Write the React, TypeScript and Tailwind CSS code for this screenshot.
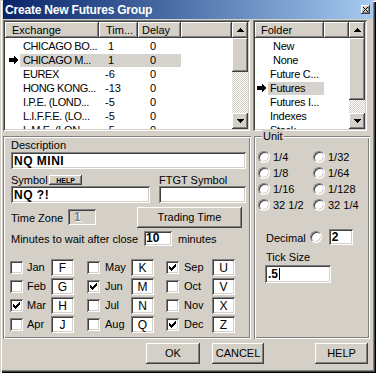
import React from "react";

const raised =
  "shadow-[inset_-1px_-1px_#404040,inset_1px_1px_#ffffff,inset_-2px_-2px_#808080]";
const sunken =
  "shadow-[inset_1px_1px_#808080,inset_-1px_-1px_#ffffff,inset_2px_2px_#404040,inset_-2px_-2px_#d4d0c8]";
const etched =
  "shadow-[inset_1px_1px_#808080,inset_-1px_-1px_#ffffff,inset_2px_2px_#ffffff,inset_-2px_-2px_#808080]";
const dither =
  "bg-[image:repeating-conic-gradient(#ffffff_0%_25%,#d4d0c8_0%_50%)] bg-[length:2px_2px]";

const exchanges = [
  { name: "CHICAGO BO...", tim: "1", delay: "0" },
  { name: "CHICAGO M...", tim: "1", delay: "0", sel: true },
  { name: "EUREX", tim: "-6", delay: "0" },
  { name: "HONG KONG...", tim: "-13", delay: "0" },
  { name: "I.P.E. (LOND...", tim: "-5", delay: "0" },
  { name: "L.I.F.F.E. (LO...", tim: "-5", delay: "0" },
  { name: "L.M.E. (LON...", tim: "-5", delay: "0" },
];

const folders = [
  { name: "New", indent: true },
  { name: "None", indent: true },
  { name: "Future C..." },
  { name: "Futures", sel: true },
  { name: "Futures I..." },
  { name: "Indexes" },
  { name: "Stock..." },
];

const months = [
  [
    { m: "Jan", c: "F" },
    { m: "Feb", c: "G" },
    { m: "Mar", c: "H", on: true },
    { m: "Apr", c: "J" },
  ],
  [
    { m: "May", c: "K" },
    { m: "Jun", c: "M", on: true },
    { m: "Jul", c: "N" },
    { m: "Aug", c: "Q" },
  ],
  [
    { m: "Sep", c: "U", on: true },
    { m: "Oct", c: "V" },
    { m: "Nov", c: "X" },
    { m: "Dec", c: "Z", on: true },
  ],
];

function Pointer() {
  return (
    <svg width="10" height="8" viewBox="0 0 10 8" shapeRendering="crispEdges">
      <path d="M0 2H5V0H6V1H7V2H8V3H9V5H8V6H7V7H6V8H5V6H0Z" fill="#000" />
    </svg>
  );
}

function Tri({ down }: { down?: boolean }) {
  const rows = down ? [7, 5, 3, 1] : [1, 3, 5, 7];
  return (
    <svg width="7" height="4" viewBox="0 0 7 4" shapeRendering="crispEdges">
      {rows.map((w, i) => (
        <rect key={i} x={(7 - w) / 2} y={i} width={w} height="1" fill="#000" />
      ))}
    </svg>
  );
}

function Check() {
  const ys = [2, 3, 4, 3, 2, 1, 0];
  return (
    <svg width="7" height="7" viewBox="0 0 7 7" shapeRendering="crispEdges">
      {ys.map((y, i) => (
        <rect key={i} x={i} y={y} width="1" height="3" fill="#000" />
      ))}
    </svg>
  );
}

function CheckBox({ on }: { on?: boolean }) {
  return (
    <div className={`w-[13px] h-[13px] shrink-0 bg-white flex items-center justify-center ${sunken}`}>
      {on && <Check />}
    </div>
  );
}

function Radio() {
  return (
    <div className="w-[12px] h-[12px] shrink-0 rounded-full bg-white border border-t-[#808080] border-l-[#808080] border-r-white border-b-white shadow-[inset_1px_1px_#404040,inset_-1px_-1px_#d4d0c8]" />
  );
}

function VScroll({ thumb }: { thumb: string }) {
  return (
    <div className="w-[16px] shrink-0 flex flex-col">
      <div className={`h-[16px] shrink-0 bg-[#d4d0c8] flex items-center justify-center ${raised}`}>
        <Tri />
      </div>
      <div className={`shrink-0 bg-[#d4d0c8] ${thumb} ${raised}`} />
      <div className={`flex-1 ${dither}`} />
      <div className={`h-[16px] shrink-0 bg-[#d4d0c8] flex items-center justify-center ${raised}`}>
        <Tri down />
      </div>
    </div>
  );
}

function HeadCell({ w, pl, children }: { w: string; pl: string; children?: React.ReactNode }) {
  return (
    <div className={`h-[16px] shrink-0 bg-[#d4d0c8] flex items-center ${w} ${pl} ${raised}`}>
      {children}
    </div>
  );
}

function Button({ w, children }: { w: string; children: React.ReactNode }) {
  return (
    <div className={`h-[21px] bg-[#d4d0c8] flex items-center justify-center ${w} ${raised}`}>
      {children}
    </div>
  );
}

export default function App() {
  return (
    <div className="w-[376px] h-[373px] overflow-hidden bg-[#d4d0c8] text-black text-[11px] leading-none font-['Liberation_Sans',Arial,sans-serif] flex flex-col shadow-[inset_1px_1px_#d4d0c8,inset_2px_2px_#ffffff,inset_-1px_-1px_#000000,inset_-2px_-2px_#404040,inset_-3px_-3px_#808080]">
      {/* title */}
      <div className="mx-[3px] h-[19px] shrink-0 flex items-center bg-linear-to-r from-[#0a246a] to-[#a6caf0]">
        <span className="pl-[2px] text-white font-bold text-[12px] tracking-[-0.2px]">
          Create New Futures Group
        </span>
        <div className={`ml-auto mr-[3px] w-[9px] h-[9px] bg-[#d4d0c8] flex items-center justify-center ${raised}`}>
          <svg width="5" height="5" viewBox="0 0 5 5" shapeRendering="crispEdges">
            <path d="M0 0H1V1H2V2H3V1H4V0H5V1H4V2H3V3H4V4H5V5H4V4H3V3H2V4H1V5H0V4H1V3H2V2H1V1H0Z" fill="#000" />
          </svg>
        </div>
      </div>

      {/* lists */}
      <div className="mt-[1px] ml-[3px] flex gap-[3px] shrink-0">
        <div className={`w-[247px] h-[111px] bg-white p-[2px] flex ${sunken}`}>
          <div className="flex-1 flex flex-col overflow-hidden">
            <div className="flex shrink-0">
              <HeadCell w="w-[94px]" pl="pl-[7px]">Exchange</HeadCell>
              <HeadCell w="w-[39px]" pl="pl-[7px]">Tim...</HeadCell>
              <HeadCell w="w-[43px]" pl="pl-[4px]">Delay</HeadCell>
              <HeadCell w="flex-1" pl="pl-0" />
            </div>
            <div className="pt-[1px]">
              {exchanges.map((r) => (
                <div key={r.name} className="flex items-center h-[14px]">
                  <div className="w-[15px] pl-[4px] flex items-center">{r.sel && <Pointer />}</div>
                  <div className={`w-[161px] h-[13px] flex items-center whitespace-nowrap ${r.sel ? "bg-[#d6d3ce]" : ""}`}>
                    <span className="w-[85px] pl-[3px] tracking-[-0.4px]">{r.name}</span>
                    <span className={`w-[45px] ${r.tim.startsWith("-") ? "" : "pl-[3px]"}`}>{r.tim}</span>
                    <span>{r.delay}</span>
                  </div>
                </div>
              ))}
            </div>
          </div>
          <VScroll thumb="h-[34px]" />
        </div>

        <div className={`w-[114px] h-[111px] bg-white p-[2px] flex ${sunken}`}>
          <div className="flex-1 flex flex-col overflow-hidden">
            <div className="flex shrink-0">
              <HeadCell w="w-[69px]" pl="pl-[6px]">Folder</HeadCell>
              <HeadCell w="flex-1" pl="pl-0" />
            </div>
            <div className="pt-[1px]">
              {folders.map((f) => (
                <div key={f.name} className="flex items-center h-[14px]">
                  <div className="w-[13px] pl-[2px] flex items-center">{f.sel && <Pointer />}</div>
                  <div className={`w-[56px] h-[13px] flex items-center whitespace-nowrap tracking-[-0.3px] ${f.indent ? "pl-[5px]" : "pl-[2px]"} ${f.sel ? "bg-[#d6d3ce]" : ""}`}>
                    {f.name}
                  </div>
                </div>
              ))}
            </div>
          </div>
          <VScroll thumb="h-[62px]" />
        </div>
      </div>

      {/* panels */}
      <div className="mt-[5px] ml-[3px] flex gap-[3px] shrink-0">
        <div className={`w-[248px] h-[203px] pt-[3px] pl-[8px] flex flex-col ${etched}`}>
          <div className="h-[12px] leading-[12px]">Description</div>
          <div className={`mt-[1px] w-[235px] h-[17px] bg-white pl-[3px] flex items-center font-bold text-[12px] tracking-[0.5px] ${sunken}`}>
            NQ MINI
          </div>
          <div className="mt-[5px] h-[12px] flex items-center">
            <span className="w-[38px]">Symbol</span>
            <div className={`w-[33px] h-[10px] bg-[#d4d0c8] flex items-center justify-center font-bold text-[7px] ${raised}`}>
              HELP
            </div>
            <span className="ml-[77px]">FTGT Symbol</span>
          </div>
          <div className="flex gap-[9px]">
            <div className={`w-[139px] h-[17px] bg-white pl-[3px] flex items-center font-bold text-[12px] tracking-[0.5px] ${sunken}`}>
              NQ ?!
            </div>
            <div className={`w-[87px] h-[17px] bg-white ${sunken}`} />
          </div>
          <div className="mt-[6px] h-[16px] flex items-center">
            <span className="w-[57px] pt-[2px]">Time Zone</span>
            <div className={`w-[28px] h-[16px] pl-[6px] flex items-center text-[12px] font-bold text-[#808080] [text-shadow:1px_1px_#ffffff] ${sunken}`}>
              1
            </div>
            <div className="ml-[41px]">
              <Button w="w-[105px] h-[15px]">Trading Time</Button>
            </div>
          </div>
          <div className="mt-[5px] h-[16px] flex items-center">
            <span className="w-[133px] pt-[2px]">Minutes to wait after close</span>
            <div className={`w-[28px] h-[15px] bg-white pl-[2px] flex items-center font-bold text-[12px] ${sunken}`}>10</div>
            <span className="ml-[6px] pt-[2px]">minutes</span>
          </div>
          <div className="mt-[12px] -ml-[1px] flex">
            {months.map((col, ci) => (
              <div key={ci} className={`flex flex-col ${ci === 0 ? "w-[77px]" : ci === 1 ? "w-[79px]" : ""}`}>
                {col.map((m) => (
                  <div key={m.m} className="h-[19px] flex items-center">
                    <CheckBox on={m.on} />
                    <span className={`${ci === 0 ? "ml-[4px] w-[24px]" : ci === 1 ? "ml-[5px] w-[26px]" : "ml-[5px] w-[28px]"}`}>
                      {m.m}
                    </span>
                    <div className={`w-[23px] h-[17px] bg-white flex items-end justify-center pb-[2px] text-[12px] ${sunken}`}>
                      {m.c}
                    </div>
                  </div>
                ))}
              </div>
            ))}
          </div>
        </div>

        <div className={`relative w-[116px] h-[203px] ${etched}`}>
          <span className="absolute left-[8px] -top-[6px] bg-[#d4d0c8] px-[1px] leading-[12px]">Unit</span>
          <div className="pt-[13px] pl-[4px] grid grid-cols-[55px_1fr]">
            {["1/4", "1/32", "1/8", "1/64", "1/16", "1/128", "32 1/2", "32 1/4"].map((u) => (
              <div key={u} className="h-[16px] flex items-center">
                <Radio />
                <span className="ml-[3px]">{u}</span>
              </div>
            ))}
          </div>
          <div className="mt-[16px] pl-[12px] h-[16px] flex items-center">
            <span className="pt-[2px]">Decimal</span>
            <div className="ml-[4px]">
              <Radio />
            </div>
            <div className={`ml-[7px] w-[24px] h-[16px] bg-white pl-[3px] flex items-center font-bold text-[12px] ${sunken}`}>2</div>
          </div>
          <div className="mt-[6px] pl-[12px] h-[12px] leading-[12px]">Tick Size</div>
          <div className={`mt-[2px] ml-[11px] w-[66px] h-[18px] bg-white pl-[3px] flex items-center font-bold text-[12px] ${sunken}`}>
            .5<span className="ml-[1px] w-[1px] h-[12px] bg-black" />
          </div>
        </div>
      </div>

      {/* buttons */}
      <div className="mt-[4px] ml-[146px] flex shrink-0">
        <Button w="w-[54px]">OK</Button>
        <div className="ml-[12px]">
          <Button w="w-[52px]">CANCEL</Button>
        </div>
        <div className="ml-[51px]">
          <Button w="w-[53px]">HELP</Button>
        </div>
      </div>
    </div>
  );
}
